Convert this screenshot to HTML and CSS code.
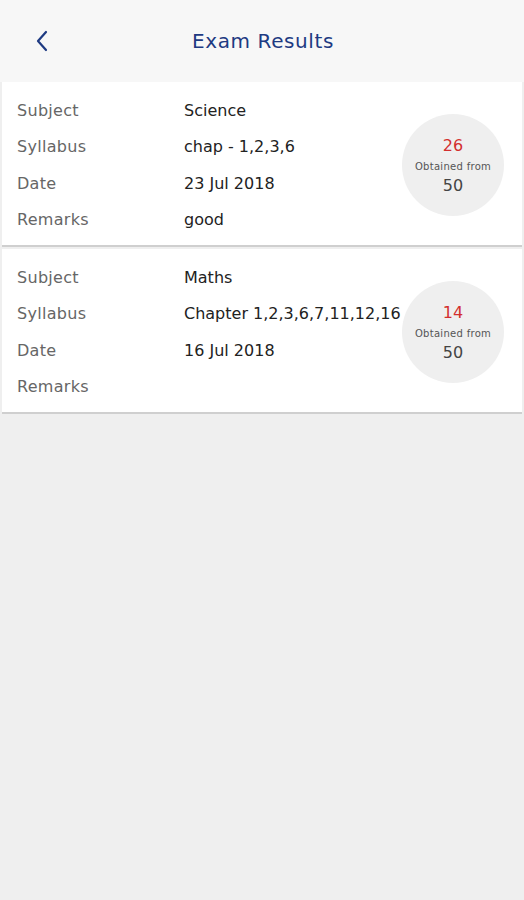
FILE: index.html
```html
<!DOCTYPE html>
<html lang="en">
<head>
  <meta charset="UTF-8" />
  <meta name="viewport" content="width=device-width, initial-scale=1" />
  <title>Exam Results</title>
  <link rel="stylesheet" href="styles.css">
</head>
<body>

  <div class="topbar">
    <span class="back">
      <svg width="14" height="22" viewBox="0 0 14 22">
        <path d="M11 2 L3 11 L11 20" fill="none" stroke="#1e3a82" stroke-width="2.2" stroke-linecap="round" stroke-linejoin="round"/>
      </svg>
    </span>
    <h2>Exam Results</h2>
  </div>

  <div class="card">
    <div class="rows">
      <div class="row"><span class="label">Subject</span><span class="value">Science</span></div>
      <div class="row"><span class="label">Syllabus</span><span class="value">chap - 1,2,3,6</span></div>
      <div class="row"><span class="label">Date</span><span class="value">23 Jul 2018</span></div>
      <div class="row"><span class="label">Remarks</span><span class="value">good</span></div>
    </div>
    <div class="score">
      <span class="got">26</span>
      <span class="from">Obtained from</span>
      <span class="max">50</span>
    </div>
  </div>

  <div class="card">
    <div class="rows">
      <div class="row"><span class="label">Subject</span><span class="value">Maths</span></div>
      <div class="row"><span class="label">Syllabus</span><span class="value">Chapter 1,2,3,6,7,11,12,16</span></div>
      <div class="row"><span class="label">Date</span><span class="value">16 Jul 2018</span></div>
      <div class="row"><span class="label">Remarks</span><span class="value"></span></div>
    </div>
    <div class="score">
      <span class="got">14</span>
      <span class="from">Obtained from</span>
      <span class="max">50</span>
    </div>
  </div>

</body>
</html>
```

FILE: styles.css
```css
body {
  margin: 0;
  font-family: "DejaVu Sans", Arial, sans-serif;
  background: #efefef;
  min-height: 900px;
}
.topbar {
  height: 82px;
  background: #f7f7f7;
  display: flex;
  align-items: center;
  justify-content: center;
  position: relative;
}
.topbar h2 {
  margin: 0;
  font-size: 20px;
  font-weight: normal;
  letter-spacing: 0.6px;
  color: #1e3a82;
  padding-left: 2px;
}
.back {
  position: absolute;
  left: 35px;
  top: 30px;
}
.card {
  margin: 0 2px 2px;
  background: #fff;
  display: flex;
  align-items: center;
  border-bottom: 2px solid #cfcfcf;
  padding: 10px 0 7px;
}
.rows {
  flex: 1;
  min-width: 0;
}
.row {
  display: flex;
  height: 36.5px;
  align-items: center;
  font-size: 16px;
}
.label {
  width: 167px;
  flex-shrink: 0;
  padding-left: 15px;
  letter-spacing: 0.3px;
  color: #666;
}
.value {
  color: #222;
  white-space: nowrap;
}
.score {
  width: 102px;
  height: 102px;
  flex-shrink: 0;
  border-radius: 50%;
  background: #efefef;
  margin-right: 18px;
  display: flex;
  flex-direction: column;
  align-items: center;
  justify-content: center;
}
.got {
  color: #d32f2f;
  font-size: 16px;
}
.from {
  color: #555;
  font-size: 10px;
  letter-spacing: 0.3px;
  margin: 6px 0 4px;
}
.max {
  color: #444;
  font-size: 16px;
}
```
